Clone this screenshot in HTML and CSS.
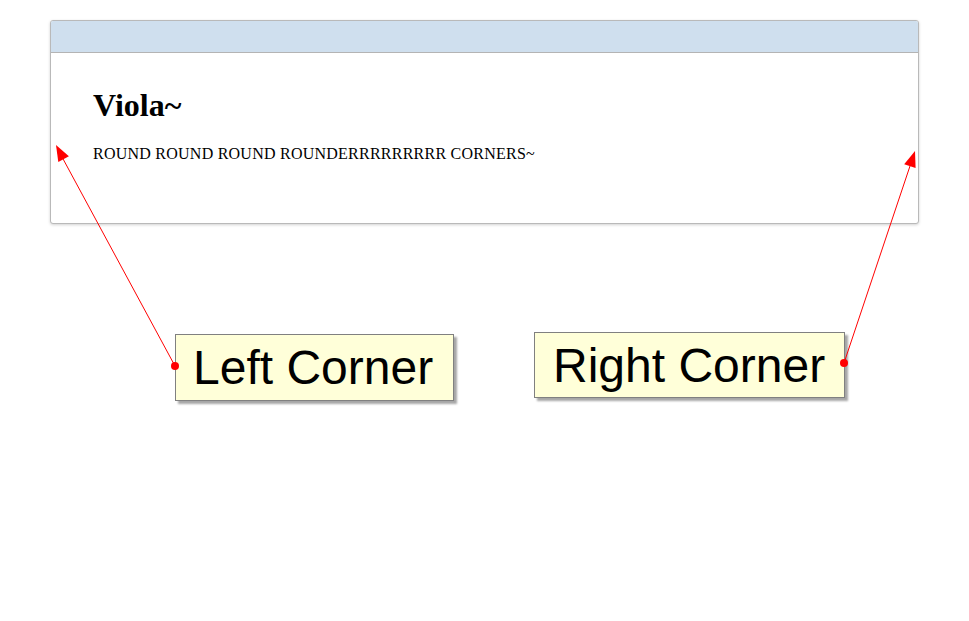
FILE: index.html
```html
<!DOCTYPE html>
<html lang="en">
<head>
    <meta charset="UTF-8">
    <meta name="viewport" content="width=device-width, initial-scale=1.0">
    <title>Rounded Corners</title>
    <link rel="stylesheet" href="styles.css">
</head>
<body>
    <div class="page">
        <div class="box">
            <div class="box-head"></div>
            <div class="box-body">
                <h1>Viola~</h1>
                <p>ROUND ROUND ROUND ROUNDERRRRRRRRR CORNERS~</p>
            </div>
        </div>

        <!-- callouts -->
        <div class="note note-left">Left Corner</div>
        <div class="note note-right">Right Corner</div>

        <svg class="arrows" width="969" height="621" viewBox="0 0 969 621">
            <line x1="175" y1="366" x2="62" y2="157" stroke="#ff0000" stroke-width="1"/>
            <polygon points="56,145 68.9,156.3 58.3,161.9" fill="#ff0000"/>
            <circle cx="175" cy="366" r="4" fill="#ff0000"/>

            <line x1="844" y1="363" x2="910" y2="166" stroke="#ff0000" stroke-width="1"/>
            <polygon points="915,151 915.6,168.1 904.2,164.3" fill="#ff0000"/>
            <circle cx="844" cy="363" r="4" fill="#ff0000"/>
        </svg>
    </div>
</body>
</html>
```

FILE: styles.css
```css
body {
    margin: 0;
    padding: 0;
    background-color: #fff;
    font-family: "Liberation Serif", "Times New Roman", serif;
}
.page {
    position: relative;
    height: 621px;
    padding: 20px 50px 0;
    box-sizing: border-box;
}
.box {
    border: 1px solid #b9b9b9;
    border-radius: 3px;
    background-color: #fff;
    box-shadow: 0 1px 3px rgba(0, 0, 0, 0.18);
}
.box-head {
    height: 31px;
    background-color: #cfdfee;
    border-bottom: 1px solid #b4b4b4;
    border-radius: 2px 2px 0 0;
}
.box-body {
    padding: 34px 43px 60px 42px;
}
.box-body h1 {
    margin: 0 0 21px;
    font-size: 32px;
    font-weight: bold;
    color: #000;
}
.box-body p {
    margin: 0;
    font-size: 16px;
    letter-spacing: 0.24px;
    color: #000;
}
.note {
    position: absolute;
    box-sizing: border-box;
    padding: 6px 0 0 17px;
    background-color: #ffffd9;
    border: 1px solid #808080;
    box-shadow: 3px 3px 2px rgba(0, 0, 0, 0.35);
    font-family: "Liberation Sans", Arial, sans-serif;
    font-size: 48px;
    line-height: 54px;
    color: #000;
    white-space: nowrap;
}
.note-left {
    left: 175px;
    top: 334px;
    width: 279px;
    height: 67px;
}
.note-right {
    left: 534px;
    top: 332px;
    width: 311px;
    height: 66px;
    padding-left: 18px;
}
.arrows {
    position: absolute;
    left: 0;
    top: 0;
    pointer-events: none;
}
```
